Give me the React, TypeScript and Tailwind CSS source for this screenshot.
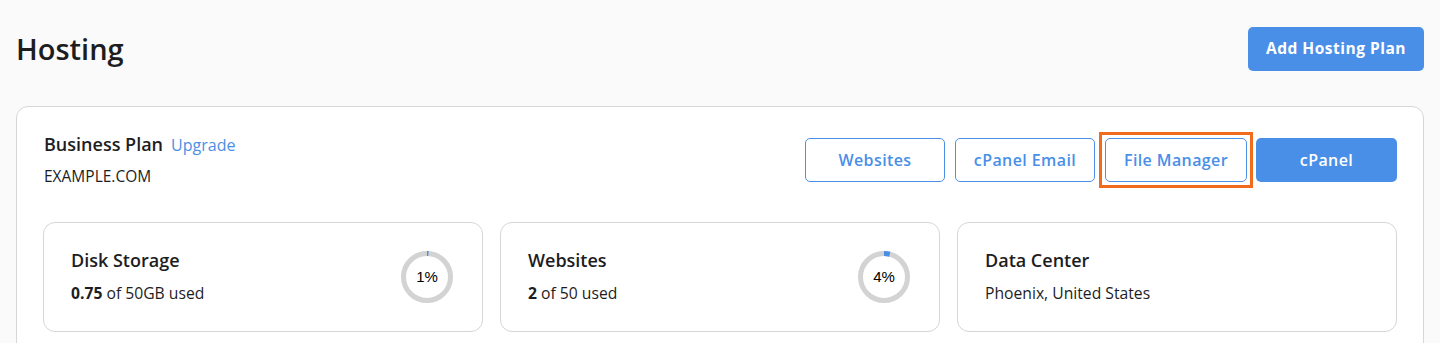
const stats = [
  { title: "Disk Storage", value: "0.75", rest: " of 50GB used", pct: 1 },
  { title: "Websites", value: "2", rest: " of 50 used", pct: 4 },
];

const Ring = ({ pct }: { pct: number }) => {
  const r = 23.5;
  const c = 2 * Math.PI * r;
  return (
    <div className="relative w-[52px] h-[52px] shrink-0">
      <svg width="52" height="52" viewBox="0 0 52 52" className="-rotate-90">
        <circle cx="26" cy="26" r={r} fill="none" stroke="#d3d3d3" strokeWidth="5" />
        <circle
          cx="26"
          cy="26"
          r={r}
          fill="none"
          stroke="#4a8fe7"
          strokeWidth="5"
          strokeDasharray={`${(c * pct) / 100} ${c}`}
        />
      </svg>
      <span className="absolute inset-0 flex items-center justify-center text-[15px] text-black font-['Liberation_Sans',Arial,sans-serif]">
        {pct}%
      </span>
    </div>
  );
};

const OutlineBtn = ({ label }: { label: string }) => (
  <button className="h-[44px] w-[140px] rounded-[5px] border border-[#4a8fe7] bg-white text-[16px] font-semibold tracking-[0.4px] text-[#4a8fe7]">
    {label}
  </button>
);

export default function App() {
  return (
    <div className="min-h-screen bg-[#fafafa] px-4 pt-[27px] font-['Open_Sans',sans-serif] text-[#1d1d1f]">
      <div className="flex items-center justify-between">
        <h1 className="text-[29px] font-semibold leading-[44px]">Hosting</h1>
        <button className="h-[44px] w-[176px] rounded-[5px] bg-[#4a8fe7] text-[15.5px] font-bold tracking-[0.5px] text-white">
          Add Hosting Plan
        </button>
      </div>

      <div className="mt-[35px] rounded-[12px] border border-[#d6d6d6] bg-white px-[26px] pt-[31px] pb-8">
        <div className="flex items-start justify-between">
          <div className="-mt-[6px] pl-px">
            <div className="flex items-baseline gap-[8px] leading-[24px]">
              <span className="text-[18px] font-semibold">Business Plan</span>
              <a className="text-[16px] text-[#4a8fe7]">Upgrade</a>
            </div>
            <div className="mt-[7px] text-[15.5px] leading-[24px]">EXAMPLE.COM</div>
          </div>
          <div className="flex gap-[10px]">
            <OutlineBtn label="Websites" />
            <OutlineBtn label="cPanel Email" />
            <div className="-m-[6px] border-[3px] border-[#f26b1d] p-[3px]">
              <button className="h-[44px] w-[142px] rounded-[5px] border border-[#4a8fe7] bg-white text-[16px] font-semibold tracking-[0.4px] text-[#4a8fe7]">
                File Manager
              </button>
            </div>
            <button className="ml-[-1px] h-[44px] w-[141px] rounded-[5px] bg-[#4a8fe7] text-[16px] font-semibold tracking-[0.4px] text-white">
              cPanel
            </button>
          </div>
        </div>

        <div className="mt-[34px] grid grid-cols-3 gap-[17px]">
          {stats.map((s) => (
            <div
              key={s.title}
              className="flex h-[110px] items-center justify-between rounded-[12px] border border-[#d6d6d6] pl-[27px] pr-[29px]"
            >
              <div className="mb-[4px]">
                <div className="text-[18px] font-semibold leading-[26px]">{s.title}</div>
                <div className="mt-[9px] text-[15.7px] leading-[22px]">
                  <b>{s.value}</b>
                  {s.rest}
                </div>
              </div>
              <Ring pct={s.pct} />
            </div>
          ))}
          <div className="flex h-[110px] items-center rounded-[12px] border border-[#d6d6d6] pl-[27px]">
            <div className="mb-[4px]">
              <div className="text-[18px] font-semibold leading-[26px]">Data Center</div>
              <div className="mt-[9px] text-[15.7px] leading-[22px]">Phoenix, United States</div>
            </div>
          </div>
        </div>
      </div>
    </div>
  );
}
